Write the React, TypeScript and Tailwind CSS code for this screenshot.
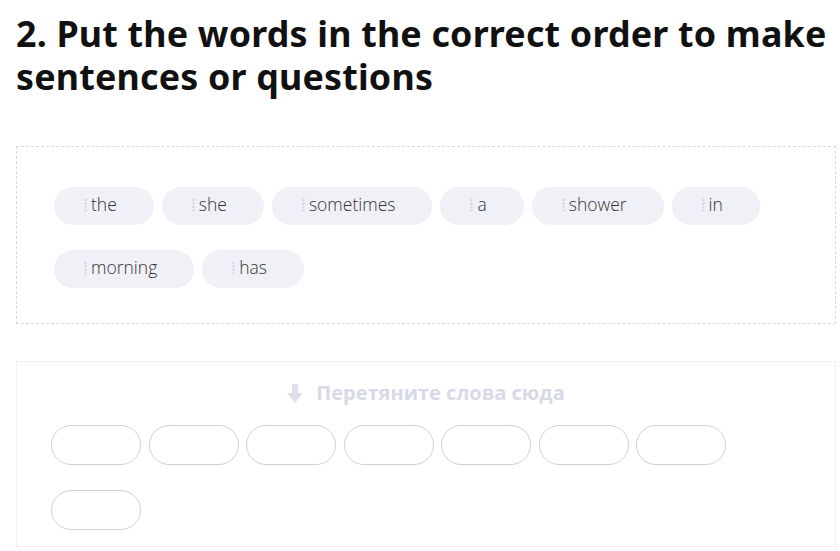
const words = ['the', 'she', 'sometimes', 'a', 'shower', 'in', 'morning', 'has']

function Grip() {
  return (
    <svg width="3" height="14" viewBox="0 0 3 14" className="shrink-0">
      {[1, 4.5, 8, 11.5].map((y) => (
        <rect key={y} x="0.5" y={y} width="2" height="2" fill="#cfd2dc" />
      ))}
    </svg>
  )
}

function Chip({ word }: { word: string }) {
  return (
    <div className="flex h-[38px] items-center gap-[4px] rounded-full bg-[#f0f1f6] pb-[3px] pl-[30px] pr-[37px] text-[17.5px] font-light text-[#333]">
      <Grip />
      <span className="leading-none">{word}</span>
    </div>
  )
}

function ArrowDown() {
  return (
    <svg width="16" height="19" viewBox="0 0 16 19">
      <path d="M5 0h6v9h5l-8 10-8-10h5z" fill="#dde0ea" />
    </svg>
  )
}

export default function App() {
  return (
    <div className="bg-white pl-4 pr-1 pt-[12px] font-['Open_Sans',sans-serif]" style={{ width: 840, height: 551 }}>
      <h1 className="font-['Noto_Sans',sans-serif] text-[35.8px] font-bold leading-[43px] tracking-[0.2px] text-[#111]">
        2. Put the words in the correct order to make sentences or questions
      </h1>

      <div className="mt-[48px] border border-dashed border-[#d6d9ea] pb-[35px] pl-[37px] pr-4 pt-[40px]">
        <div className="flex flex-wrap gap-x-[8px] gap-y-[25px]">
          {words.map((w) => (
            <Chip key={w} word={w} />
          ))}
        </div>
      </div>

      <div className="mt-[37px] h-[186px] border border-dotted border-[#e0e2ea] pl-[34px] pt-[16px]">
        <div className="flex items-center justify-center gap-[13px] pr-[34px] text-[20px] font-bold text-[#d7dae6]">
          <ArrowDown />
          <span>Перетяните слова сюда</span>
        </div>
        <div className="mt-[17px] flex w-[690px] flex-wrap gap-x-[7.5px] gap-y-[25px]">
          {words.map((w) => (
            <div key={w} className="h-[40px] w-[90px] rounded-full border border-[#cfcfd6]" />
          ))}
        </div>
      </div>
    </div>
  )
}
